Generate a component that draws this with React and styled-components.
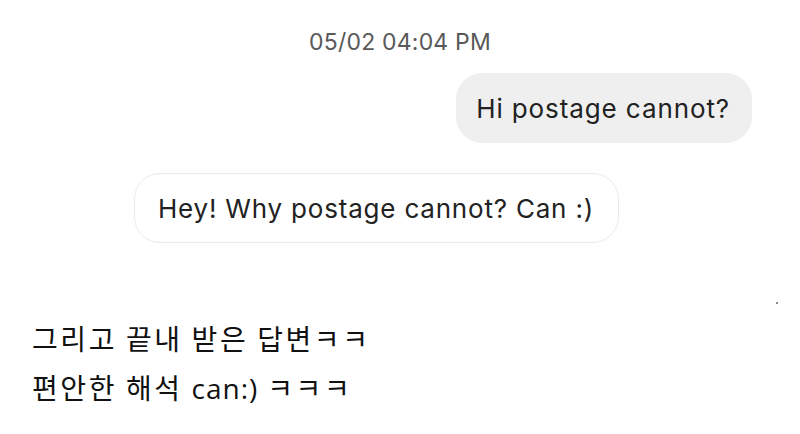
import styled, { createGlobalStyle } from 'styled-components';

const GlobalStyle = createGlobalStyle`
    html, body {
        margin: 0;
        padding: 0;
        background: #ffffff;
    }
    #root {
        width: 800px;
        height: 434px;
        overflow: hidden;
    }
`;

const Page = styled.div`
    position: relative;
    width: 800px;
    height: 434px;
    background: #ffffff;
    display: flex;
    flex-direction: column;
`;

const Chat = styled.div`
    display: flex;
    flex-direction: column;
    padding-top: 27px;
    font-family: Inter, "Noto Sans", sans-serif;
`;

const Timestamp = styled.div`
    text-align: center;
    font-size: 23px;
    line-height: 30px;
    color: #595959;
    letter-spacing: 0.2px;
`;

const Row = styled.div`
    display: flex;
    justify-content: ${(p) => (p.$mine ? 'flex-end' : 'flex-start')};
    padding: ${(p) => (p.$mine ? '16px 48px 0 0' : '30px 0 0 134px')};
`;

const Bubble = styled.div`
    height: 70px;
    box-sizing: border-box;
    padding: 0 ${(p) => (p.$mine ? '21px 0 19px' : '24px 0 23px')};
    display: flex;
    align-items: center;
    border-radius: 26px;
    font-size: 26px;
    color: #222222;
    letter-spacing: ${(p) => (p.$mine ? '0.9px' : '0.8px')};
    white-space: nowrap;
    background: ${(p) => (p.$mine ? '#efefef' : '#ffffff')};
    border: 1.5px solid ${(p) => (p.$mine ? '#efefef' : '#ebebeb')};
`;

const Caption = styled.div`
    padding: 71px 0 0 32px;
    font-family: "Noto Sans CJK KR", "Noto Sans", sans-serif;
    font-size: 28px;
    line-height: 49px;
    letter-spacing: 2.6px;
    color: #111111;
`;

const Latin = styled.span`
    font-family: "Open Sans", "Noto Sans", sans-serif;
    letter-spacing: 1px;
`;

const Speck = styled.span`
    position: absolute;
    left: 776px;
    top: 302px;
    width: 2px;
    height: 2px;
    background: #8a8a8a;
`;

const App = () => {
    return (
        <Page>
            <GlobalStyle />
            <Chat>
                <Timestamp>05/02 04:04 PM</Timestamp>
                <Row $mine>
                    <Bubble $mine>Hi postage cannot?</Bubble>
                </Row>
                <Row>
                    <Bubble>Hey! Why postage cannot? Can :)</Bubble>
                </Row>
            </Chat>
            <Caption>
                <div>그리고 끝내 받은 답변ㅋㅋ</div>
                <div>편안한 해석 <Latin>can:)</Latin> ㅋㅋㅋ</div>
            </Caption>
            <Speck />
        </Page>
    );
};

export default App;
